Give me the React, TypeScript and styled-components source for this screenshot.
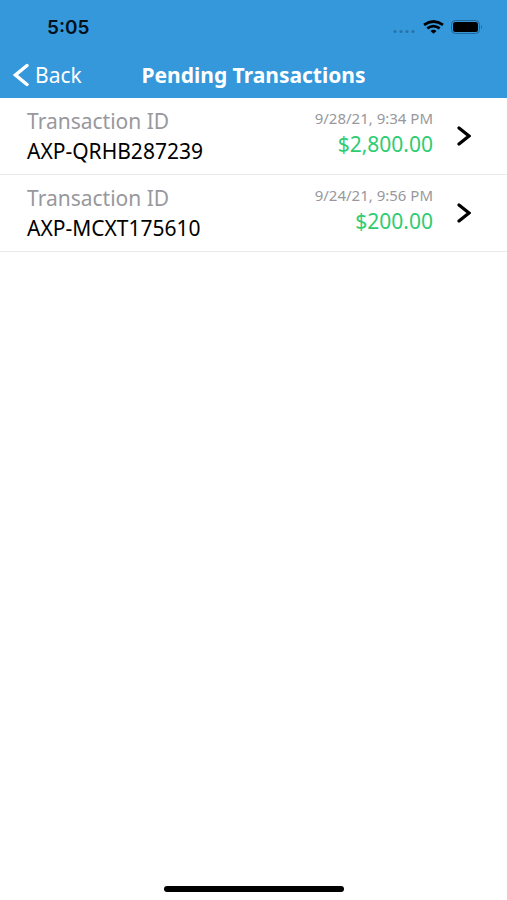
import React from 'react';
import styled, { createGlobalStyle } from 'styled-components';

const Global = createGlobalStyle`
  * { box-sizing: border-box; }
  body { margin: 0; background: #fff; font-family: "Noto Sans", sans-serif; }
`;
const Screen = styled.div`
  min-height: 100vh;
  display: flex;
  flex-direction: column;
  background: #fff;
`;
const Header = styled.header`
  background: #3498db;
`;
const StatusBar = styled.div`
  height: 54px;
  padding: 0 24px 0 47px;
  display: flex;
  align-items: center;
  justify-content: space-between;
`;
const Clock = styled.time`
  font-family: Inter, sans-serif;
  font-size: 19px;
  font-weight: 600;
  color: #04111b;
`;
const Indicators = styled.div`
  display: flex;
  align-items: center;
  gap: 7px;
`;
const NavBar = styled.nav`
  height: 44px;
  padding: 0 13px 2px;
  display: grid;
  grid-template-columns: 1fr auto 1fr;
  align-items: center;
`;
const BackButton = styled.button`
  justify-self: start;
  display: flex;
  align-items: center;
  gap: 6px;
  padding: 0;
  border: 0;
  background: none;
  color: #fff;
  font: 400 21px/26px "Noto Sans", sans-serif;
`;
const Title = styled.h1`
  margin: 0;
  color: #fff;
  font-size: 21px;
  line-height: 26px;
  font-weight: 700;
`;
const List = styled.ul`
  margin: 0;
  padding: 0;
  list-style: none;
  flex: 1;
`;
const Item = styled.li`
  border-bottom: 1px solid #e9e9e9;
`;
const RowButton = styled.button`
  width: 100%;
  padding: 8px 36px 8px 27px;
  display: flex;
  align-items: center;
  border: 0;
  background: none;
  font-family: inherit;
`;
const Column = styled.span<{ $end?: boolean }>`
  display: flex;
  flex-direction: column;
  align-self: flex-start;
  flex: ${(p) => (p.$end ? 'none' : 1)};
  align-items: ${(p) => (p.$end ? 'flex-end' : 'flex-start')};
  margin-right: ${(p) => (p.$end ? '24px' : '0')};
`;
const Label = styled.span`
  color: #98989d;
  font-size: 21px;
  line-height: 30px;
`;
const Reference = styled.span`
  color: #000;
  font-size: 21px;
  line-height: 30px;
`;
const Stamp = styled.span`
  color: #98989d;
  font-size: 15px;
  line-height: 24px;
`;
const Amount = styled.span`
  color: #2ecc71;
  font-size: 21px;
  line-height: 28px;
`;
const Footer = styled.footer`
  display: flex;
  justify-content: center;
  padding-bottom: 8px;
`;
const HomeBar = styled.div`
  width: 180px;
  height: 6px;
  border-radius: 3px;
  background: #000;
`;

const transactions = [
  { id: 'AXP-QRHB287239', date: '9/28/21, 9:34 PM', amount: '$2,800.00' },
  { id: 'AXP-MCXT175610', date: '9/24/21, 9:56 PM', amount: '$200.00' },
];

export default function App() {
  return (
    <Screen>
      <Global />
      <Header>
        <StatusBar>
          <Clock>5:05</Clock>
          <Indicators>
            <svg width="24" height="14" viewBox="0 0 24 14" fill="#2874a8" aria-hidden="true">
              <circle cx="3" cy="11.500" r="1.600" /><circle cx="9" cy="11.500" r="1.600" />
              <circle cx="15" cy="11.500" r="1.600" /><circle cx="21" cy="11.500" r="1.600" />
            </svg>
            <svg width="21" height="14" viewBox="0 0 21 14" fill="none" stroke="#000" strokeWidth="2.700" aria-hidden="true">
              <path d="M1 4.800Q10.500-1.800 20 4.800M4.300 8.300Q10.500 3.800 16.700 8.300" />
              <path d="M7.500 11Q10.500 8.400 13.500 11L10.500 13.800Z" fill="#000" stroke="none" />
            </svg>
            <svg width="32" height="14" viewBox="0 0 32 14" aria-hidden="true">
              <rect x=".5" y=".5" width="28" height="13" rx="4" fill="none" stroke="#22659a" />
              <rect x="2" y="2" width="25" height="10" rx="2.500" />
              <path d="M30 5q2 2 0 4z" fill="#22659a" />
            </svg>
          </Indicators>
        </StatusBar>
        <NavBar>
          <BackButton type="button">
            <svg width="16" height="24" viewBox="0 0 16 24" fill="none" stroke="#fff" strokeWidth="3.400" strokeLinecap="round" aria-hidden="true">
              <path d="M14 2.500L2.500 12L14 21.500" />
            </svg>
            Back
          </BackButton>
          <Title>Pending Transactions</Title>
        </NavBar>
      </Header>
      <List>
        {transactions.map((t) => (
          <Item key={t.id}>
            <RowButton type="button">
              <Column>
                <Label>Transaction ID</Label>
                <Reference>{t.id}</Reference>
              </Column>
              <Column $end>
                <Stamp>{t.date}</Stamp>
                <Amount>{t.amount}</Amount>
              </Column>
              <svg width="14" height="20" viewBox="0 0 14 20" fill="none" stroke="#000" strokeWidth="3.200" strokeLinecap="round" aria-hidden="true">
                <path d="M2 2L12 10L2 18" />
              </svg>
            </RowButton>
          </Item>
        ))}
      </List>
      <Footer><HomeBar /></Footer>
    </Screen>
  );
}
